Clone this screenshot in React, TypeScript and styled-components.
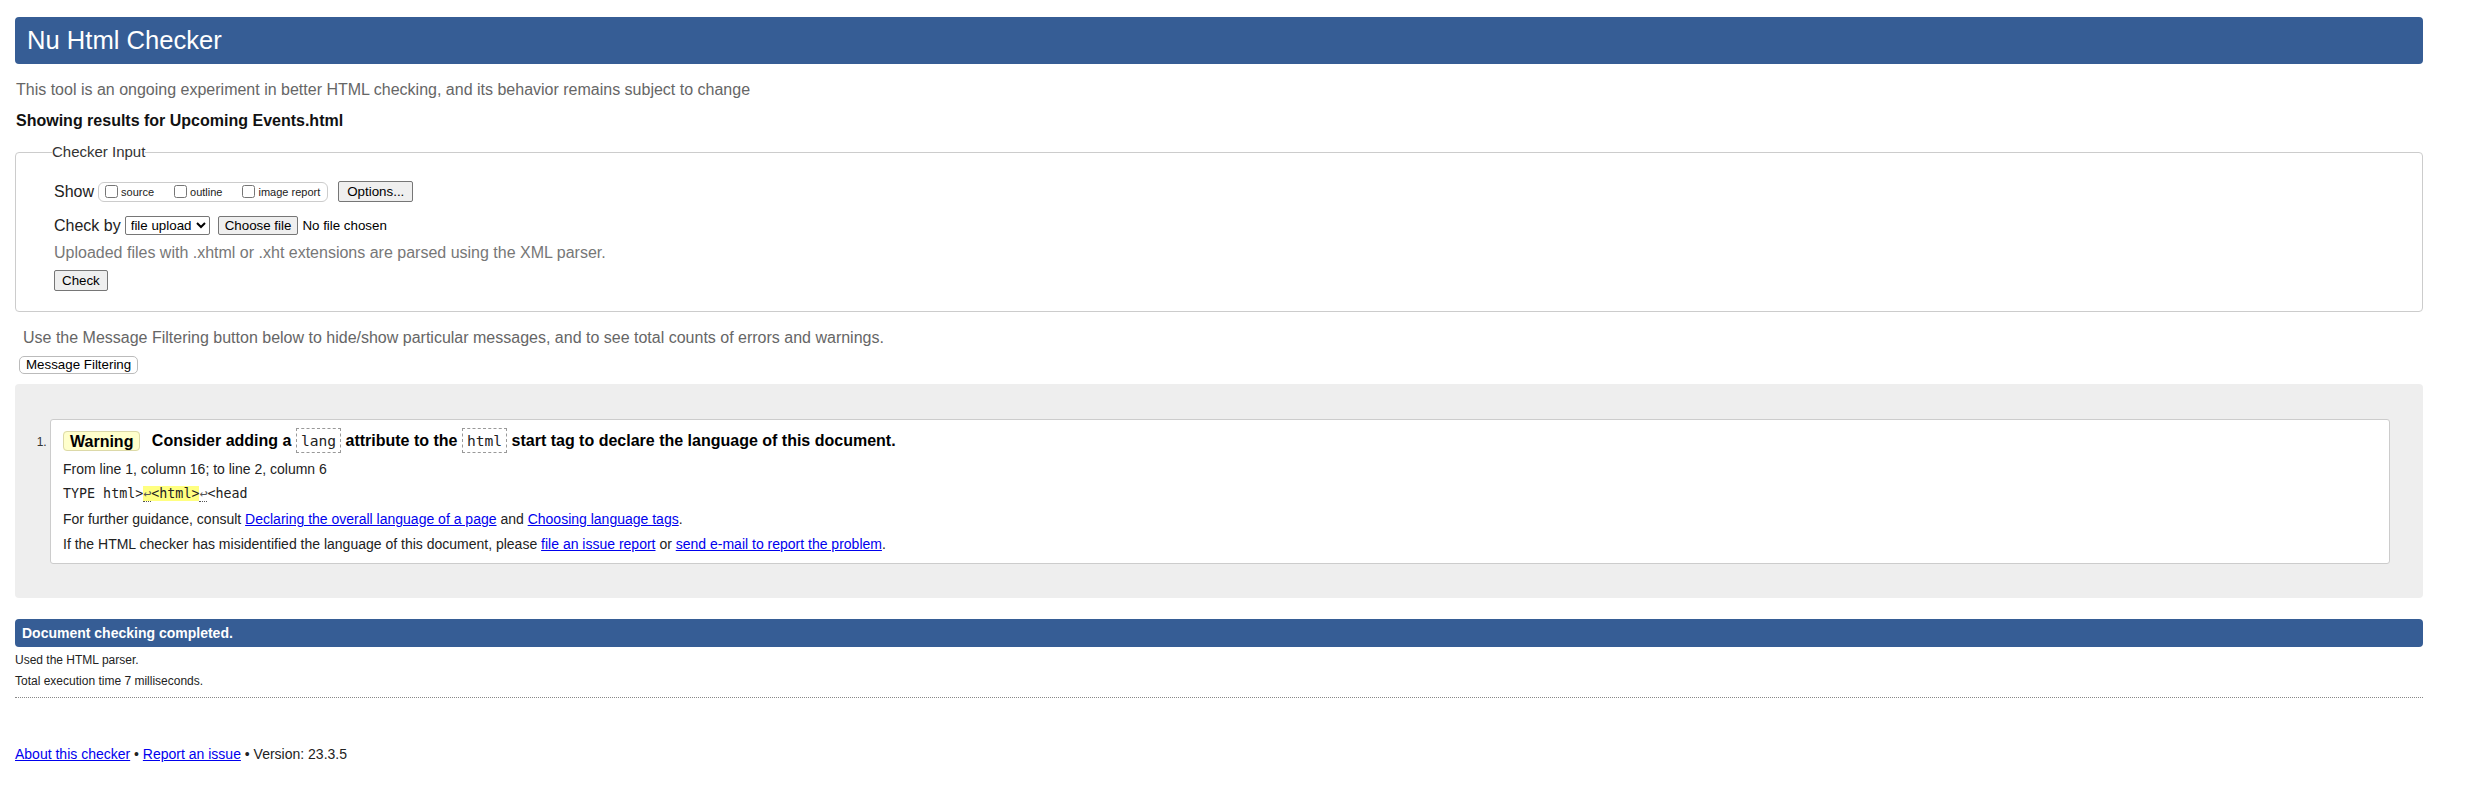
import React from "react";
import styled, { createGlobalStyle } from "styled-components";

const GlobalStyle = createGlobalStyle`
  html, body { margin: 0; padding: 0; background: #fff; }
  body {
    font-family: "Liberation Sans", Arial, sans-serif;
    color: #000;
    overflow: hidden;
  }
`;

const Page = styled.div`
  padding: 17px 47px 0 15px;
`;

const Banner = styled.h1`
  margin: 0;
  height: 47px;
  padding: 0 12px;
  background: #365d95;
  border-radius: 4px;
  color: #fff;
  font-size: 25.6px;
  font-weight: normal;
  line-height: 47px;
`;

const Note = styled.p<{ $top: number; $indent: number }>`
  margin: ${(p) => p.$top}px 0 0;
  padding-left: ${(p) => p.$indent}px;
  font-size: 16px;
  line-height: 20px;
  color: #666;
`;

const Subject = styled.p`
  margin: 11px 0 0 1px;
  font-size: 16px;
  line-height: 20px;
  font-weight: bold;
  color: #111;
`;

const InputSet = styled.fieldset`
  margin: 13px 0 0;
  padding: 21px 0 20px 38px;
  border: 1px solid #ccc;
  border-radius: 4px;
  min-width: 0;
`;

const Legend = styled.legend`
  margin-left: -2px;
  padding: 0;
  font-size: 15px;
  line-height: 16px;
  color: #333;
`;

const FormRow = styled.div<{ $height: number; $top: number }>`
  display: flex;
  align-items: center;
  column-gap: 4px;
  height: ${(p) => p.$height}px;
  margin-top: ${(p) => p.$top}px;
`;

const FieldLabel = styled.span`
  font-size: 16px;
  color: #222;
`;

const CheckGroup = styled.span`
  display: inline-flex;
  align-items: center;
  gap: 20px;
  box-sizing: border-box;
  height: 20px;
  padding: 0 7px 0 6px;
  border: 1px solid #ccc;
  border-radius: 6px;
`;

const CheckItem = styled.label`
  display: inline-flex;
  align-items: center;
  gap: 3px;
  font-size: 11px;
  color: #222;
`;

const Checkbox = styled.input`
  margin: 0;
  width: 13px;
  height: 13px;
`;

const NativeButton = styled.button<{ $height: number; $pad: number; $gap?: number }>`
  box-sizing: border-box;
  height: ${(p) => p.$height}px;
  margin-left: ${(p) => p.$gap ?? 0}px;
  padding: 0 ${(p) => p.$pad}px;
  font: 13.333px "Liberation Sans", Arial, sans-serif;
  color: #000;
  background: #efefef;
  border: 1px solid #767676;
  border-radius: 2px;
`;

const Select = styled.select`
  box-sizing: border-box;
  width: 85px;
  height: 19px;
  padding: 0 0 0 1px;
  font: 13.333px "Liberation Sans", Arial, sans-serif;
  color: #000;
  background: #fff;
  border: 1px solid #767676;
  border-radius: 2px;
`;

const FileState = styled.span`
  font-size: 13.333px;
  color: #000;
`;

const Hint = styled.p`
  margin: 7.5px 0 0;
  font-size: 16px;
  line-height: 20px;
  color: #777;
`;

const FilterButton = styled.button`
  display: block;
  box-sizing: border-box;
  height: 18px;
  margin: 8px 0 0 4px;
  padding: 0 6px;
  font: 13.333px "Liberation Sans", Arial, sans-serif;
  color: #000;
  background: #fff;
  border: 1px solid #bbb;
  border-radius: 5px;
`;

const ResultsPanel = styled.div`
  margin-top: 10.5px;
  padding: 35px 33px 34px 35px;
  background: #eee;
  border-radius: 4px;
`;

const MessageList = styled.ol`
  margin: 0;
  padding: 0;
  list-style: decimal outside;
`;

const MessageItem = styled.li`
  padding: 8px 13px 10px 12px;
  background: #fff;
  border: 1px solid #ccc;
  border-radius: 3px;
  font-size: 12px;
  color: #333;
`;

const MessageHeading = styled.p`
  margin: 0;
  font-size: 16px;
  line-height: 25px;
  font-weight: bold;
  color: #000;
`;

const Badge = styled.span`
  margin-right: 7px;
  padding: 0.5px 6px;
  background: #ffc;
  border: 1px solid #dcd9a8;
  border-radius: 4px;
`;

const CodeTag = styled.code`
  padding: 3px 4px;
  font-family: "DejaVu Sans Mono", monospace;
  font-size: 14.6px;
  font-weight: normal;
  color: #222;
  border: 1px dashed #999;
`;

const Detail = styled.p`
  margin: 7px 0 0;
  font-size: 14px;
  line-height: 18px;
  color: #222;
`;

const Extract = styled.p`
  margin: 7px 0 0;
  font-family: "DejaVu Sans Mono", monospace;
  font-size: 13.333px;
  line-height: 18px;
  color: #222;
  white-space: pre;
`;

const Highlight = styled.mark`
  background: #ffff80;
  color: #222;
`;

const LineBreak = styled.span`
  font-family: "DejaVu Sans Mono", "DejaVu Sans", monospace;
  color: #555;
  border-bottom: 1px dotted #555;
`;

const Link = styled.a`
  color: #00e;
  text-decoration: underline;
`;

const StatusBar = styled.div`
  margin-top: 21px;
  height: 28px;
  padding: 0 7px;
  background: #365d95;
  border-radius: 4px;
  color: #fff;
  font-size: 14px;
  font-weight: bold;
  line-height: 28px;
`;

const StatusLine = styled.p<{ $top: number }>`
  margin: ${(p) => p.$top}px 0 0;
  font-size: 12px;
  line-height: 21px;
  color: #222;
`;

const Rule = styled.hr`
  height: 0;
  margin: 5px 0 0;
  border: 0;
  border-top: 1px dotted #888;
`;

const Footer = styled.p`
  margin: 47px 0 0;
  font-size: 14px;
  line-height: 18px;
  color: #222;
`;

export default function App() {
  return (
    <>
      <GlobalStyle />
      <Page>
        <Banner>Nu Html Checker</Banner>
        <Note $top={16} $indent={1}>
          This tool is an ongoing experiment in better HTML checking, and its behavior remains subject to change
        </Note>
        <Subject>Showing results for Upcoming Events.html</Subject>

        <InputSet>
          <Legend>Checker Input</Legend>
          <FormRow $height={21} $top={0}>
            <FieldLabel>Show</FieldLabel>
            <CheckGroup>
              <CheckItem>
                <Checkbox type="checkbox" />
                source
              </CheckItem>
              <CheckItem>
                <Checkbox type="checkbox" />
                outline
              </CheckItem>
              <CheckItem>
                <Checkbox type="checkbox" />
                image report
              </CheckItem>
            </CheckGroup>
            <NativeButton type="button" $height={21} $pad={8} $gap={6}>
              Options...
            </NativeButton>
          </FormRow>
          <FormRow $height={19} $top={14}>
            <FieldLabel>Check by</FieldLabel>
            <Select defaultValue="file">
              <option value="file">file upload</option>
              <option value="address">address</option>
              <option value="text">text input</option>
            </Select>
            <NativeButton type="button" $height={19} $pad={6} $gap={4}>
              Choose file
            </NativeButton>
            <FileState>No file chosen</FileState>
          </FormRow>
          <Hint>Uploaded files with .xhtml or .xht extensions are parsed using the XML parser.</Hint>
          <FormRow $height={21} $top={7.5}>
            <NativeButton type="button" $height={21} $pad={7}>
              Check
            </NativeButton>
          </FormRow>
        </InputSet>

        <Note $top={15.5} $indent={8}>
          Use the Message Filtering button below to hide/show particular messages, and to see total counts of errors and warnings.
        </Note>
        <FilterButton type="button">Message Filtering</FilterButton>

        <ResultsPanel>
          <MessageList>
            <MessageItem>
              <MessageHeading>
                <Badge>Warning</Badge> Consider adding a <CodeTag>lang</CodeTag> attribute to the{" "}
                <CodeTag>html</CodeTag> start tag to declare the language of this document.
              </MessageHeading>
              <Detail>From line 1, column 16; to line 2, column 6</Detail>
              <Extract>
                {"TYPE html>"}
                <Highlight>
                  <LineBreak>↩</LineBreak>
                  {"<html>"}
                </Highlight>
                <LineBreak>↩</LineBreak>
                {"<head"}
              </Extract>
              <Detail>
                For further guidance, consult <Link href="#">Declaring the overall language of a page</Link> and{" "}
                <Link href="#">Choosing language tags</Link>.
              </Detail>
              <Detail>
                If the HTML checker has misidentified the language of this document, please{" "}
                <Link href="#">file an issue report</Link> or <Link href="#">send e-mail to report the problem</Link>.
              </Detail>
            </MessageItem>
          </MessageList>
        </ResultsPanel>

        <StatusBar>Document checking completed.</StatusBar>
        <StatusLine $top={2.5}>Used the HTML parser.</StatusLine>
        <StatusLine $top={0}>Total execution time 7 milliseconds.</StatusLine>
        <Rule />
        <Footer>
          <Link href="#">About this checker</Link> • <Link href="#">Report an issue</Link> • Version: 23.3.5
        </Footer>
      </Page>
    </>
  );
}
